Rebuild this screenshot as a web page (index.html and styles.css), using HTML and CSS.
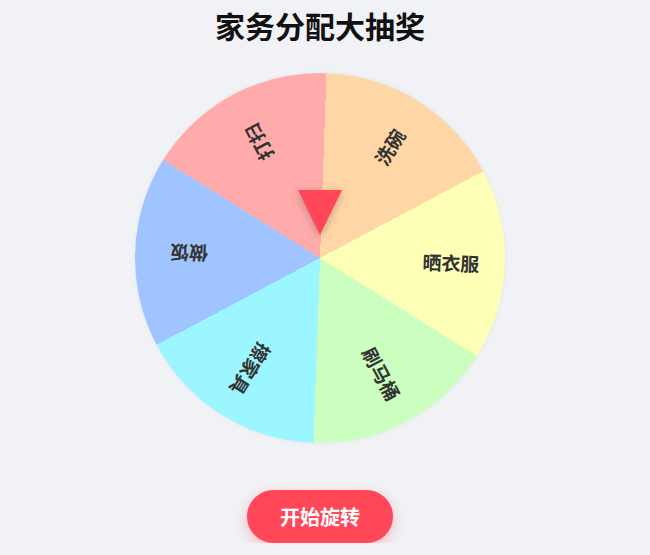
FILE: index.html
```html
<!DOCTYPE html>
<html lang="zh">

<head>
    <meta charset="UTF-8">
    <meta name="viewport" content="width=device-width, initial-scale=1.0">
    <title>家务分配大抽奖</title>
    <link rel="stylesheet" href="styles.css">
</head>
<body>
    <div class="page">
        <h1 class="title">家务分配大抽奖</h1>

        <div class="wheel-box">
            <div class="wheel" id="idWheel">
                <span class="label l1">洗碗</span>
                <span class="label l2">晒衣服</span>
                <span class="label l3">刷马桶</span>
                <span class="label l4">擦家具</span>
                <span class="label l5">做饭</span>
                <span class="label l6">打扫</span>
            </div>
            <div class="pointer"></div>
        </div>

        <button class="spin-btn" id="idButton">开始旋转</button>
    </div>

    <script>
        var wheel = document.getElementById("idWheel");
        var botao = document.getElementById("idButton");
        var giro = 0;

        botao.onclick = function () {
            // gira pelo menos 5 voltas
            giro += 1800 + Math.floor(Math.random() * 360);
            wheel.style.transform = "rotate(" + giro + "deg)";
        };
    </script>
</body>

</html>
```

FILE: styles.css
```css
body {
    font-family: "Noto Sans CJK SC", "Noto Sans", sans-serif;
    background-color: #f0f2f5;
    margin: 0;
    padding: 0;
}

.page {
    width: 640px;
    display: flex;
    flex-direction: column;
    align-items: center;
}

.title {
    margin: 5px 0 0;
    font-size: 30px;
    line-height: 40px;
    font-weight: bold;
    color: #111;
}

.wheel-box {
    position: relative;
    width: 370px;
    height: 370px;
    margin-top: 28px;
}

.wheel {
    position: relative;
    width: 100%;
    height: 100%;
    border-radius: 50%;
    background: conic-gradient(from 2deg,
        #ffd6a5 0deg 60deg,
        #fdffb6 60deg 120deg,
        #caffbf 120deg 180deg,
        #9bf6ff 180deg 240deg,
        #a0c4ff 240deg 300deg,
        #ffabab 300deg 360deg);
    box-shadow: 0 0 4px rgba(0, 0, 0, 0.06);
    transition: transform 4s cubic-bezier(0.2, 0.8, 0.3, 1);
}

.label {
    position: absolute;
    left: 50%;
    top: 50%;
    width: 120px;
    height: 24px;
    margin-left: -60px;
    margin-top: -12px;
    line-height: 24px;
    text-align: center;
    font-size: 19px;
    font-weight: bold;
    color: #333;
}

.l1 { transform: rotate(-58deg) translateX(131px); }
.l2 { transform: rotate(2deg) translateX(131px); }
.l3 { transform: rotate(62deg) translateX(131px); }
.l4 { transform: rotate(122deg) translateX(131px); }
.l5 { transform: rotate(182deg) translateX(131px); }
.l6 { transform: rotate(242deg) translateX(131px); }

.pointer {
    position: absolute;
    top: 117px;
    left: 50%;
    margin-left: -22px;
    width: 0;
    height: 0;
    border-left: 22px solid transparent;
    border-right: 22px solid transparent;
    border-top: 45px solid #ff4757;
    filter: drop-shadow(0 2px 4px rgba(0, 0, 0, 0.25));
}

.spin-btn {
    margin-top: 47px;
    width: 146px;
    height: 53px;
    border: none;
    border-radius: 27px;
    background-color: #ff4757;
    color: #fff;
    font-family: inherit;
    font-size: 20px;
    font-weight: bold;
    cursor: pointer;
    box-shadow: 0 4px 12px rgba(255, 71, 87, 0.35);
}
```
